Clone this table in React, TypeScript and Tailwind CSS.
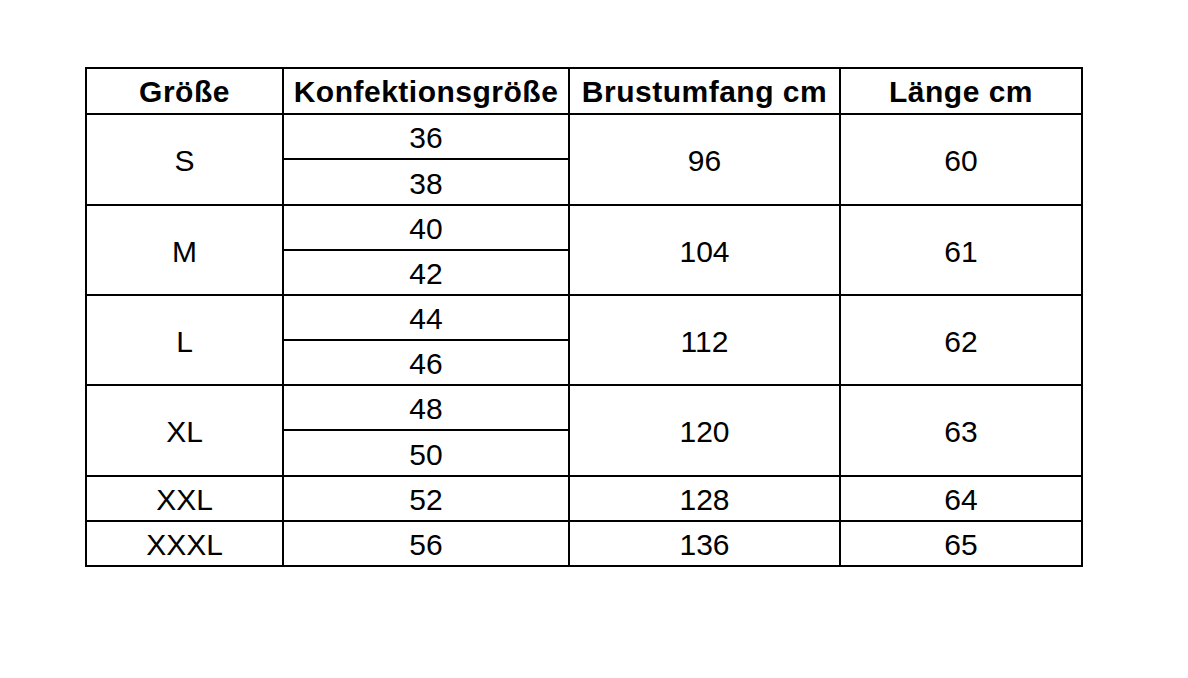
const rows = [
  { size: "S", konf: ["36", "38"], brust: "96", laenge: "60" },
  { size: "M", konf: ["40", "42"], brust: "104", laenge: "61" },
  { size: "L", konf: ["44", "46"], brust: "112", laenge: "62" },
  { size: "XL", konf: ["48", "50"], brust: "120", laenge: "63" },
  { size: "XXL", konf: ["52"], brust: "128", laenge: "64" },
  { size: "XXXL", konf: ["56"], brust: "136", laenge: "65" },
];

// the second sub-row of S and XL is one pixel taller in the original
const tallRows = ["38", "50"];

const cell = "border-2 border-black p-0 text-center align-middle";

export default function App() {
  return (
    <div className="min-h-[678px] w-[1188px] bg-white pl-[85px] pt-[67px] text-black [font-family:'Liberation_Sans',Arial,sans-serif]">
      <table className="w-[996px] table-fixed border-collapse text-[30px] leading-none">
        <colgroup>
          <col className="w-[197px]" />
          <col className="w-[286px]" />
          <col className="w-[271px]" />
          <col className="w-[242px]" />
        </colgroup>
        <thead>
          <tr className="h-[46px]">
            {["Größe", "Konfektionsgröße", "Brustumfang cm", "Länge cm"].map((h) => (
              <th key={h} className={`${cell} pt-[2px] text-[30px] font-bold tracking-[0.5px]`}>
                {h}
              </th>
            ))}
          </tr>
        </thead>
        <tbody>
          {rows.map((r) =>
            r.konf.map((k, i) => (
              <tr key={r.size + k} className={tallRows.includes(k) ? "h-[46px]" : "h-[45px]"}>
                {i === 0 && (
                  <td rowSpan={r.konf.length} className={`${cell} pt-[3px]`}>
                    {r.size}
                  </td>
                )}
                <td className={`${cell} pt-[3px]`}>{k}</td>
                {i === 0 && (
                  <>
                    <td rowSpan={r.konf.length} className={`${cell} pt-[3px]`}>
                      {r.brust}
                    </td>
                    <td rowSpan={r.konf.length} className={`${cell} pt-[3px]`}>
                      {r.laenge}
                    </td>
                  </>
                )}
              </tr>
            ))
          )}
        </tbody>
      </table>
    </div>
  );
}
